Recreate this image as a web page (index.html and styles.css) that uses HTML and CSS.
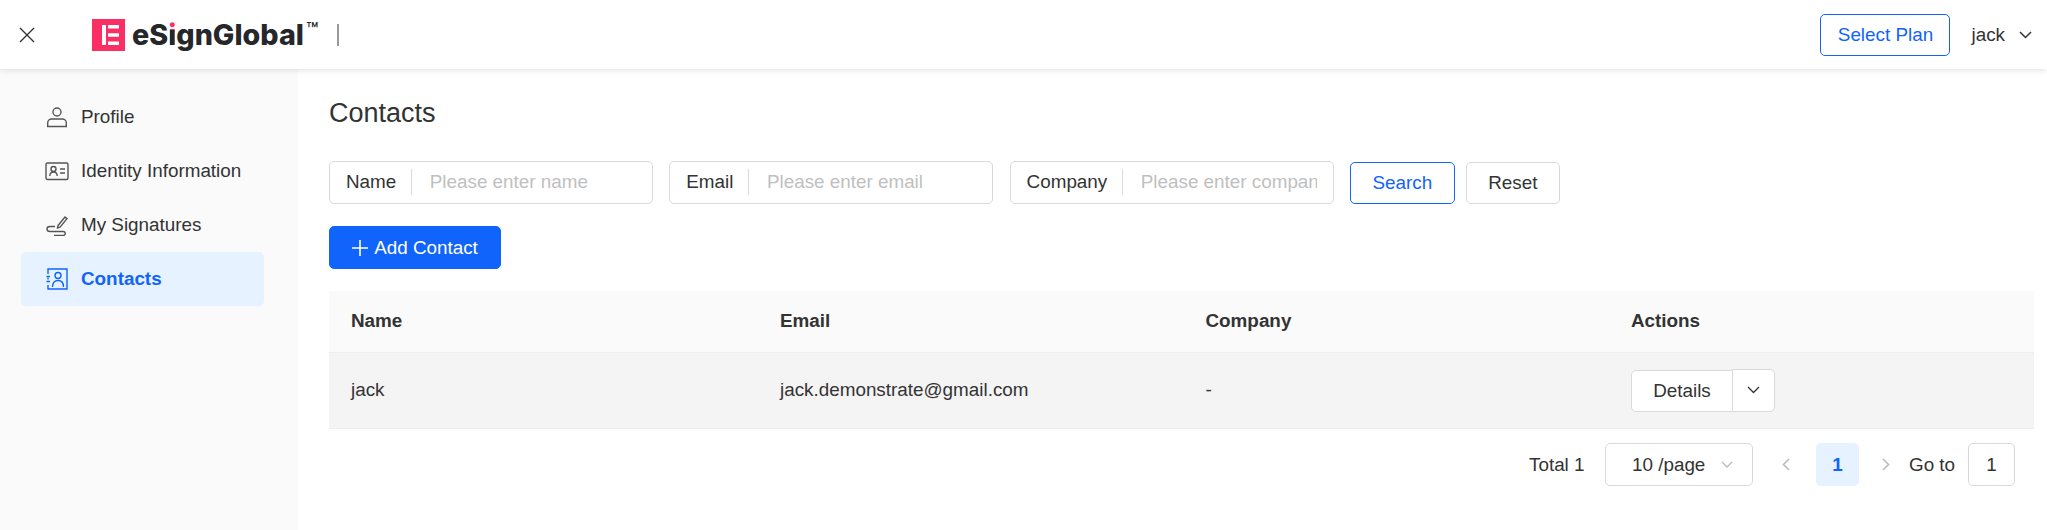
FILE: index.html
```html
<!DOCTYPE html>
<html lang="en">
<head>
<meta charset="utf-8">
<title>Contacts</title>
<link rel="stylesheet" href="styles.css">
</head>
<body>
<header class="topbar">
  <button class="close-btn" aria-label="Close">
    <svg width="16" height="16" viewBox="0 0 16 16"><path d="M1 1l14 14M15 1L1 15" fill="none" stroke="#333" stroke-width="1.4"/></svg>
  </button>
  <div class="logo">
    <svg class="logo-mark" width="33" height="32" viewBox="0 0 33 32"><rect width="33" height="32" fill="#fb2f63"/><path d="M10 6h4v20h-4zM16 6h11v3.600H16zM16 14.200h11v3.600H16zM16 22.400h11V26H16z" fill="#fff"/></svg>
    <span class="logo-text">eS<span class="logo-i">i</span>gnGlobal</span><span class="logo-tm">™</span>
  </div>
  <span class="logo-divider"></span>
  <div class="topbar-right">
    <button class="btn btn-outline plan-btn">Select Plan</button>
    <span class="user">jack</span>
    <svg class="user-caret" width="13" height="8" viewBox="0 0 13 8"><path d="M1 1l5.500 5.500L12 1" fill="none" stroke="#333" stroke-width="1.5"/></svg>
  </div>
</header>
<div class="layout">
  <nav class="sidebar">
    <a class="nav-item">
      <svg width="22" height="22" viewBox="0 0 22 22" fill="none" stroke="#555" stroke-width="1.4"><circle cx="11" cy="6" r="4"/><path d="M1.700 20.500v-3.500c0-2.500 2-4 4-4h10.600c2 0 4 1.500 4 4v3.500z"/></svg>
      <span>Profile</span>
    </a>
    <a class="nav-item">
      <svg width="24" height="20" viewBox="0 0 24 20" fill="none" stroke="#555" stroke-width="1.400"><rect x="1" y="2" width="22" height="16.500" rx="1.500"/><circle cx="8.500" cy="8" r="2.500"/><path d="M4.800 15c0-2.500 1.500-4 3.700-4s3.700 1.500 3.700 4M15 8h5M15 12h5"/></svg>
      <span>Identity Information</span>
    </a>
    <a class="nav-item">
      <svg width="22" height="22" viewBox="0 0 22 22" fill="none" stroke="#555" stroke-width="1.400"><path d="M12 11.500l7-8.500 2 1.700-7 8.500-2.500.8zM9 12.500H4c-4 0-4 5 0 5h13c3 0 3 4 0 4H8"/></svg>
      <span>My Signatures</span>
    </a>
    <a class="nav-item active">
      <svg width="22" height="22" viewBox="0 0 22 22" fill="none" stroke="#1064fb" stroke-width="1.400"><path d="M2 6V1h19v20H2v-4M2 9.500v2"/><path d="M.500 8.500h3.500M.500 13.500h3.500"/><circle cx="12" cy="7.500" r="3"/><path d="M6.500 19c0-4 2-6.500 5.500-6.500s5.500 2.500 5.500 6.500"/></svg>
      <span>Contacts</span>
    </a>
  </nav>
  <main class="main">
    <h1 class="title">Contacts</h1>
    <form class="filters">
      <label class="field">
        <span class="field-label">Name</span>
        <input class="field-input" placeholder="Please enter name">
      </label>
      <label class="field">
        <span class="field-label">Email</span>
        <input class="field-input" placeholder="Please enter email">
      </label>
      <label class="field">
        <span class="field-label">Company</span>
        <input class="field-input" placeholder="Please enter company">
      </label>
      <div class="filter-actions">
        <button type="button" class="btn btn-outline search-btn">Search</button>
        <button type="button" class="btn reset-btn">Reset</button>
      </div>
    </form>
    <button class="btn btn-primary add-btn">
      <svg width="16" height="16" viewBox="0 0 16 16"><path d="M8 0v16M0 8h16" stroke="#fff" stroke-width="1.600"/></svg>
      Add Contact
    </button>
    <div class="table">
      <div class="row head">
        <div class="cell">Name</div>
        <div class="cell">Email</div>
        <div class="cell">Company</div>
        <div class="cell">Actions</div>
      </div>
      <div class="row body-row">
        <div class="cell">jack</div>
        <div class="cell">jack.demonstrate@gmail.com</div>
        <div class="cell">-</div>
        <div class="cell">
          <div class="split">
            <button class="btn split-main">Details</button>
            <button class="btn split-caret" aria-label="More">
              <svg width="13" height="8" viewBox="0 0 13 8"><path d="M1 1l5.500 5.500L12 1" fill="none" stroke="#333" stroke-width="1.300"/></svg>
            </button>
          </div>
        </div>
      </div>
    </div>
    <div class="pagination">
      <span class="total">Total 1</span>
      <div class="page-size">
        <span>10 /page</span>
        <svg width="12" height="7" viewBox="0 0 12 7"><path d="M1 1l5 5 5-5" fill="none" stroke="#bbb" stroke-width="1.300"/></svg>
      </div>
      <svg class="pager-arrow prev" width="8" height="13" viewBox="0 0 8 13"><path d="M7 1L1.500 6.500 7 12" fill="none" stroke="#bbb" stroke-width="1.600"/></svg>
      <span class="page-current">1</span>
      <svg class="pager-arrow next" width="8" height="13" viewBox="0 0 8 13"><path d="M1 1l5.500 5.500L1 12" fill="none" stroke="#bbb" stroke-width="1.600"/></svg>
      <span class="goto">Go to</span>
      <span class="goto-input">1</span>
    </div>
  </main>
</div>
</body>
</html>
```
FILE: styles.css
```css
* { box-sizing: border-box; }
html, body { margin: 0; height: 100%; overflow: hidden; }
body {
  font-family: "Liberation Sans", Arial, sans-serif;
  font-size: 18.850px;
  color: #333;
  background: #fff;
}
button { font: inherit; cursor: pointer; }

.topbar {
  height: 69px;
  display: flex;
  align-items: center;
  padding-left: 19px;
  background: #fff;
  box-shadow: 0 1px 6px rgba(0, 0, 0, .12);
  position: relative;
  z-index: 2;
}
.close-btn { display: flex; padding: 0; border: 0; background: none; margin-right: 57px; }
.logo { display: flex; align-items: center; }
.logo-mark { margin-right: 7px; }
.logo-text {
  font-family: "Inter", sans-serif;
  font-weight: 800;
  font-size: 28.700px;
  color: #26272b;
}
.logo-i {
  background: linear-gradient(#fb2f63 36%, #26272b 36%);
  -webkit-background-clip: text;
  background-clip: text;
  color: transparent;
}
.logo-tm { font-family: "Inter", sans-serif; font-size: 20px; line-height: 20px; font-weight: 500; color: #26272b; align-self: flex-start; margin: 3px 0 0 2px; }
.logo-divider { width: 2px; height: 22px; background: #999; margin-left: 19px; }
.topbar-right { margin-left: auto; display: flex; align-items: center; padding-right: 15px; }
.plan-btn { width: 130px; height: 37px; margin-right: 1px; }
.user { margin-left: 20px; margin-right: 14px; }

.btn {
  height: 42px;
  padding: 0;
  border: 1px solid #d9d9d9;
  border-radius: 5px;
  background: #fff;
  color: #333;
}
.btn-outline { border-color: #1064fb; color: #1064fb; }
.btn-primary { background: #1064fb; border-color: #1064fb; color: #fff; }

.layout { display: flex; height: 461px; }
.sidebar { width: 298px; padding: 21px 34px 0 21px; background: #fafafa; flex: none; }
.nav-item {
  height: 54px;
  display: flex;
  align-items: center;
  padding-left: 24px;
  border-radius: 5px;
}
.nav-item svg { width: 24px; flex: none; margin-right: 12px; }
.nav-item.active { background: #e6f2ff; color: #1064fb; font-weight: 700; }

.main { flex: 1; padding: 25px 13px 0 31px; min-width: 0; }
.title { margin: 0 0 28px; font-size: 27px; line-height: 39px; font-weight: 400; }

.filters { display: flex; align-items: center; gap: 16.300px; }
.field {
  width: 324px;
  height: 43px;
  display: flex;
  align-items: center;
  padding: 0 16px 1px;
  border: 1px solid #d9d9d9;
  border-radius: 5px;
}
.field-label { padding-right: 15px; height: 26px; line-height: 26px; border-right: 1px solid #d9d9d9; flex: none; }
.field-input {
  flex: 1;
  min-width: 0;
  margin-left: 17.500px;
  padding: 0;
  border: 0;
  outline: 0;
  font: inherit;
  color: #333;
  background: none;
}
.field-input::placeholder { color: #bfbfbf; opacity: 1; }
.filter-actions { display: flex; gap: 11px; }
.search-btn { width: 105px; }
.reset-btn { width: 94px; }

.add-btn {
  width: 172px;
  height: 43px;
  margin-top: 22px;
  display: flex;
  align-items: center;
  justify-content: center;
  gap: 6px;
}

.table { margin-top: 22px; }
.row { display: grid; grid-template-columns: 429px 425.500px 425.500px 425px; align-items: center; padding-bottom: 2px; border-bottom: 1px solid #eee; }
.row.head { height: 62px; background: #fafafa; font-weight: 700; }
.row.body-row { height: 76px; background: #f4f4f4; }
.cell { padding-left: 22px; }

.split { display: flex; width: 144px; margin-top: 2px; }
.split-main { width: 102px; height: 42px; border-radius: 5px 0 0 5px; }
.split-caret { width: 43px; height: 43px; margin-top: -1px; margin-left: -1px; border-radius: 0 5px 5px 0; display: flex; align-items: center; justify-content: center; }

.pagination { display: flex; align-items: center; margin-top: 14px; padding-left: 1200px; height: 43px; }
.total { width: 76px; flex: none; }
.page-size {
  width: 148px;
  height: 43px;
  flex: none;
  display: flex;
  align-items: center;
  justify-content: space-between;
  padding: 0 19px 0 26px;
  border: 1px solid #d9d9d9;
  border-radius: 5px;
}
.pager-arrow { flex: none; }
.prev { margin-left: 29px; margin-right: 26px; }
.next { margin-left: 23px; }
.page-current {
  width: 43px;
  height: 43px;
  flex: none;
  display: flex;
  align-items: center;
  justify-content: center;
  background: #e6f2ff;
  border-radius: 5px;
  color: #1064fb;
  font-weight: 700;
}
.goto { margin-left: 19px; flex: none; }
.goto-input {
  width: 47px;
  height: 43px;
  margin-left: 13px;
  flex: none;
  display: flex;
  align-items: center;
  justify-content: center;
  border: 1px solid #d9d9d9;
  border-radius: 5px;
}
```
